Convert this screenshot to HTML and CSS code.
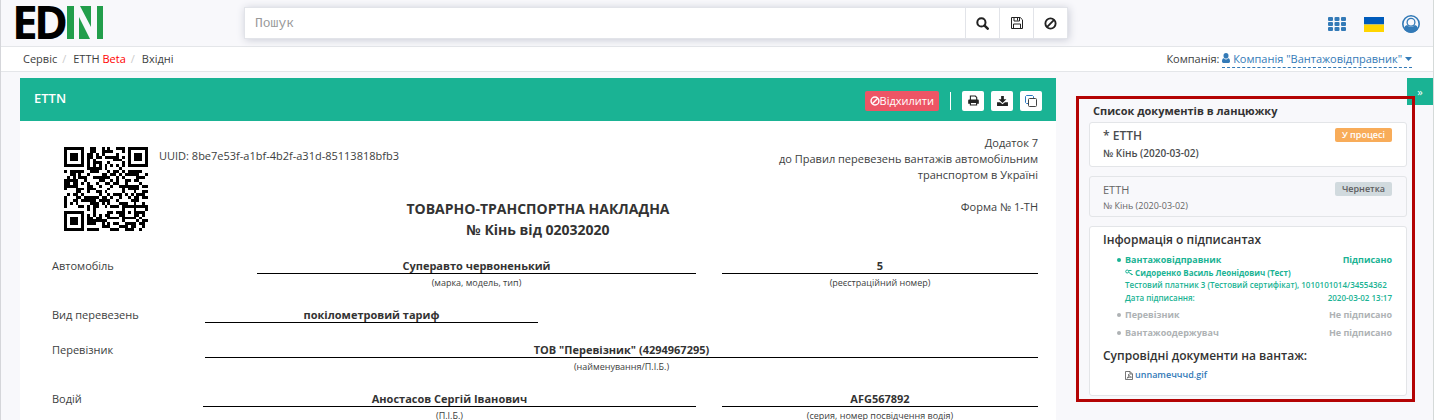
FILE: index.html
```html
<!DOCTYPE html>
<html lang="uk">
<head>
<meta charset="utf-8">
<title>EDIN – ЕТТН</title>
<link rel="stylesheet" href="styles.css">
</head>
<body>
<svg class="sprite" aria-hidden="true">
  <symbol id="ban" viewBox="0 0 16 16"><g fill="none" stroke="currentColor" stroke-width="2.3"><circle cx="8" cy="8" r="6.3"/><path d="M12.4 3.6 3.6 12.4"/></g></symbol>
</svg>
<header class="topbar">
  <a class="logo" href="#" aria-label="EDIN">
    <svg width="90" height="34" viewBox="0 0 90 34">
      <text class="logo-text" x="-3 19" y="33">ED</text>
      <g fill="#229e4b"><path d="M52 0h7v33h-7zM82 0h6v33h-6zM65 0h11v21zM64 11l11 22H64z"/></g>
    </svg>
  </a>
  <form class="search" role="search">
    <input class="search-input" type="text" placeholder="Пошук" aria-label="Пошук">
    <button class="search-btn" type="button" aria-label="Знайти"><svg width="13" height="13" viewBox="0 0 13 13"><g fill="none" stroke="currentColor"><circle cx="5.4" cy="5.4" r="4.1" stroke-width="2"/><path d="M8.6 8.6l3.1 3.1" stroke-width="2.5" stroke-linecap="round"/></g></svg></button>
    <button class="search-btn" type="button" aria-label="Зберегти"><svg width="12" height="12" viewBox="0 0 12 12"><path d="M.5.5h8.700l2.300 2.300v8.700H.5zM3 .5v3.500h5.500V.5M6.500 1v2.500M2.500 11.500v-4.500h7v4.500" fill="none" stroke="currentColor"/></svg></button>
    <button class="search-btn" type="button" aria-label="Очистити"><svg width="13" height="13"><use href="#ban"/></svg></button>
  </form>
  <nav class="tools">
    <a href="#" aria-label="Сервіси"><svg width="18" height="15" viewBox="0 0 18 15"><g fill="currentColor"><rect width="5" height="4" rx="1"/><rect x="6.500" width="5" height="4" rx="1"/><rect x="13" width="5" height="4" rx="1"/><rect y="5" width="5" height="4" rx="1"/><rect x="6.500" y="5" width="5" height="4" rx="1"/><rect x="13" y="5" width="5" height="4" rx="1"/><rect y="10" width="5" height="4" rx="1"/><rect x="6.500" y="10" width="5" height="4" rx="1"/><rect x="13" y="10" width="5" height="4" rx="1"/></g></svg></a>
    <a href="#" aria-label="Українська"><svg width="20" height="15" viewBox="0 0 20 15"><path fill="#005bbb" d="M0 0h20v7.500H0z"/><path fill="#ffd500" d="M0 7.500h20V15H0z"/></svg></a>
    <a href="#" aria-label="Профіль"><svg width="18" height="18" viewBox="0 0 18 18"><circle cx="9" cy="9" r="8.200" fill="none" stroke="currentColor" stroke-width="1.600"/><path fill="currentColor" d="M1.800 13.700c.5-2.100 1.600-3.400 3.400-3.800a4.500 4.500 0 0 0 7.600 0c1.800.4 2.900 1.700 3.400 3.800A9 9 0 0 1 9 17.700a9 9 0 0 1-7.200-4z"/><circle cx="9" cy="7.300" r="3.900" fill="none" stroke="currentColor" stroke-width="1.300"/></svg></a>
  </nav>
</header>
<div class="subbar">
  <nav class="crumbs"><a href="#">Сервіс</a><a href="#">ЕТТН <span class="beta">Beta</span></a><a href="#">Вхідні</a></nav>
  <div class="company">Компанія: <a class="company-link" href="#"><svg width="8" height="10" viewBox="0 0 8 10"><path fill="currentColor" d="M4 0a2.500 2.800 0 0 1 0 5.600A2.500 2.800 0 0 1 4 0zM1.800 5.200a3 3 0 0 0 4.400 0C7.500 5.300 8 6.700 8 8.300 8 9.500 7.500 10 6.600 10H1.400C.5 10 0 9.500 0 8.300 0 6.700.5 5.300 1.800 5.200z"/></svg> Компанія "Вантажовідправник" <svg width="7" height="8" viewBox="0 0 7 8"><path fill="currentColor" d="M0 2h7L3.500 6z"/></svg></a></div>
</div>
<div class="content">
  <main class="doc">
    <div class="doc-head">
      <h1>ETTN</h1>
      <button class="reject" type="button"><svg width="10" height="10"><use href="#ban"/></svg>Відхилити</button>
      <span class="divider"></span>
      <button class="tool-btn" type="button" aria-label="Друк"><svg width="11" height="11" viewBox="0 0 12 11"><path fill="none" stroke="currentColor" stroke-width="1.200" d="M2.600 5V.6H8l1.500 1.500V5M2.600 7.500v2.900h6.800V7.500z"/><path fill="currentColor" d="M1.500 4.500h9c.8 0 1.300.5 1.300 1.300V9H9.500V7.300h-7V9H.2V5.800c0-.8.500-1.300 1.300-1.300z"/></svg></button>
      <button class="tool-btn" type="button" aria-label="Завантажити"><svg width="11" height="10" viewBox="0 0 12 11"><path fill="currentColor" d="M4.500 0h3v3.500h2.800L6 7.600 1.700 3.500h2.800zM0 7h3.300L6 9.200 8.700 7H12v4H0z"/></svg></button>
      <button class="tool-btn" type="button" aria-label="Копіювати"><svg width="12" height="12" viewBox="0 0 12 12"><g fill="none"><path stroke="#2b78c0" d="M3 8.500H1.500l-1-1v-6l1-1h6l1 1V3"/><rect x="3.500" y="3.500" width="8" height="8" rx="1" stroke="#444"/></g></svg></button>
    </div>
    <div class="doc-body">
      <div class="doc-top">
        <svg class="qr" id="qr" role="img" aria-label="QR-код" viewBox="0 0 29 29" shape-rendering="crispEdges"></svg>
        <p class="uuid">UUID: <span id="uuid">8be7e53f-a1bf-4b2f-a31d-85113818bfb3</span></p>
        <p class="annex">Додаток 7<br>до Правил перевезень вантажів автомобільним<br>транспортом в Україні<br><br>Форма № 1-ТН</p>
        <h2 class="doc-title">ТОВАРНО-ТРАНСПОРТНА НАКЛАДНА<br>№ Кінь від 02032020</h2>
      </div>
      <div class="row row-car"><span>Автомобіль</span><div class="field"><b>Суперавто червоненький</b><small>(марка, модель, тип)</small></div><div class="field"><b>5</b><small>(реєстраційний номер)</small></div></div>
      <div class="row row-kind"><span>Вид перевезень</span><div class="field"><b>покілометровий тариф</b></div></div>
      <div class="row row-carrier"><span>Перевізник</span><div class="field"><b>ТОВ "Перевізник" (4294967295)</b><small>(найменування/П.І.Б.)</small></div></div>
      <div class="row row-driver"><span>Водій</span><div class="field"><b>Аностасов Сергій Іванович</b><small>(П.І.Б.)</small></div><div class="field"><b>AFG567892</b><small>(серия, номер посвідчення водія)</small></div></div>
    </div>
  </main>
  <aside class="side">
    <button class="collapse" type="button" aria-label="Згорнути">»</button>
    <div class="highlight"></div>
    <h2 class="side-title">Список документів в ланцюжку</h2>
    <a class="card chain current" href="#"><span class="chain-name">* ЕТТН</span><span class="badge badge-process">У процесі</span><span class="chain-num">№ Кінь (2020-03-02)</span></a>
    <a class="card chain" href="#"><span class="chain-name">ЕТТН</span><span class="badge">Чернетка</span><span class="chain-num">№ Кінь (2020-03-02)</span></a>
    <section class="card info">
      <h3>Інформація о підписантах</h3>
      <ul class="signers">
        <li class="signed">
          <div class="pair"><span>Вантажовідправник</span><span>Підписано</span></div>
          <div class="detail"><svg width="8" height="8" viewBox="0 0 8 8"><g fill="none" stroke="currentColor"><circle cx="2.200" cy="3.500" r="1.500"/><path d="M3.500 2.500H6.500M3.500 4l3.500 3M6.500 5l-1 1M7.800 6l-1 1"/></g></svg> <b>Сидоренко Василь Леонідович (Тест)</b></div>
          <div class="detail">Тестовий платник 3 (Тестовий сертифікат), 1010101014/34554362</div>
          <div class="pair detail"><span>Дата підписання:</span><span>2020-03-02 13:17</span></div>
        </li>
        <li><div class="pair"><span>Перевізник</span><span>Не підписано</span></div></li>
        <li><div class="pair"><span>Вантажоодержувач</span><span>Не підписано</span></div></li>
      </ul>
      <h3>Супровідні документи на вантаж:</h3>
      <a class="file" href="#"><svg width="8" height="9" viewBox="0 0 8 9"><path fill="none" stroke="#555" d="M.5.5h4.500l2.500 2.500v5.500h-7zM5 .5V3h2.500M2 7.200C3.500 6 4 4.500 3.700 3.200 4 5 5 6 6.500 6.200 5 6 3.500 6.300 2 7.200z" stroke-width=".8"/></svg><span>unnameчччd.gif</span></a>
    </section>
  </aside>
</div>
<script src="qr.js"></script>
</body>
</html>
```
FILE: styles.css
```css
* { box-sizing: border-box; }
body {
  margin: 0;
  min-height: 100vh;
  border-left: 1px solid #d5d6da;
  border-right: 1px solid #d5dad9;
  background: #f8f8fb;
  color: #3c3e40;
  font: 11px/16px "Open Sans", "Noto Sans", sans-serif;
  overflow-x: hidden;
}
h1, h2, h3, p, ul { margin: 0; padding: 0; }
a { color: inherit; text-decoration: none; }
button { border: 0; padding: 0; font: inherit; cursor: pointer; }
.sprite { display: none; }

.topbar { display: flex; height: 47px; padding: 0 13px 0 14px; border-bottom: 1px solid #e4e6e9; }
.logo { flex: 0 0 229px; padding-top: 6px; }
.logo svg { display: block; overflow: visible; }
.logo-text { font: 700 46px "Open Sans", sans-serif; fill: #000; }
.search { display: flex; flex: 0 1 824px; height: 32px; margin-top: 7px; border: 1px solid #e2e4e9; background: #fff; box-shadow: 1px 1px 8px #c9cbd6; }
.search-input { flex: 1; min-width: 0; border: 0; padding: 0 10px; background: none; color: #333; font: 13px "Liberation Mono", monospace; }
.search-input::placeholder { color: #999; opacity: 1; }
.search-btn { display: grid; place-items: center; width: 34px; border-left: 1px solid #e2e4e9; background: #fff; color: #222; }
.tools { display: flex; align-items: center; gap: 18px; margin-left: auto; padding-top: 2px; color: #337ab7; }
.tools svg { display: block; }

.subbar { display: flex; justify-content: space-between; height: 25px; padding: 4px 21px 4px 22px; border-bottom: 1px solid #e4e6e9; background: #fff; }
.crumbs a + a::before { content: "/"; padding: 0 7px 0 5px; color: #ccc; }
.beta { color: #f00; }
.company-link { display: inline-block; border-bottom: 1px dashed #337ab7; color: #337ab7; }

.content { display: flex; margin-top: 6px; padding-left: 19px; }
.doc { flex: 1; background: #fff; }
.doc-head { display: flex; align-items: center; gap: 7px; height: 43px; padding: 2px 14px 0; background: #1ab394; color: #fff; }
.doc-head h1 { margin-right: auto; padding-bottom: 5px; font-size: 13px; font-weight: 600; }
.reject { display: flex; align-items: center; height: 20px; padding: 0 5px; border-radius: 2px; background: #ed5565; color: #fff; }
.divider { width: 1px; height: 18px; margin: 0 4px; background: #fff; }
.tool-btn { display: grid; place-items: center; width: 22px; height: 20px; border-radius: 2px; background: #fff; color: #222; }
.doc-body { padding: 14px 18px 0; }
.doc-top { display: grid; grid-template-columns: 110px 1fr auto; grid-template-rows: 63px 42px; }
.qr { grid-row: 1 / 3; grid-column: 1; width: 84px; height: 84px; margin: 12px 0 0 26px; }
.uuid { grid-row: 1; grid-column: 2; padding: 13px 0 0 11px; }
.annex { grid-row: 1 / 3; grid-column: 3; text-align: right; }
.doc-title { grid-row: 2; grid-column: 1 / 4; font-size: 14px; line-height: 21px; text-align: center; color: #333; }
.row { display: grid; column-gap: 26px; padding-left: 14px; }
.row-car { grid-template-columns: 179px 439fr 316fr; margin-top: 18px; }
.row-kind { grid-template-columns: 127px 333fr 474fr; margin-top: 16px; }
.row-carrier { grid-template-columns: 127px 1fr; margin-top: 18px; }
.row-driver { grid-template-columns: 125px 493fr 316fr; margin-top: 16px; }
.field { text-align: center; }
.field b { display: block; height: 16px; margin-bottom: 1px; border-bottom: 1px solid #000; color: #333; }
.field small { display: block; font-size: 9px; }

.side { position: relative; flex: 0 0 377px; padding: 25px 26px 0 33px; }
.collapse { position: absolute; top: 0; right: 0; width: 26px; height: 27px; background: #1ab394; color: #fff; }
.highlight { position: absolute; top: 18px; left: 20px; right: 18px; height: 306px; border: 3px solid #b40404; pointer-events: none; }
.side-title { padding-left: 4px; margin-bottom: 3px; font-size: 11px; color: #333; }
.card { display: block; border: 1px solid #e3e5e8; border-radius: 3px; padding: 5px 14px 5px 13px; }
.chain { display: grid; grid-template-columns: 1fr 57px; align-items: start; height: 41px; margin-bottom: 9px; color: #666; }
.chain.current { height: 45px; background: #fff; color: #4a4c4e; font-weight: 600; }
.chain-num { font-size: 9px; }
.current .chain-name { font-size: 12px; }
.current .chain-num { font-size: 10px; }
.badge { border-radius: 2px; background: #d1dade; color: #5e5e5e; font-size: 9px; line-height: 14px; font-weight: 600; text-align: center; }
.badge-process { background: #f8ac59; color: #fff; }
.info { background: #fff; padding-bottom: 12px; }
.info h3 { font-size: 12px; font-weight: 600; color: #333; }
.signers { margin: 5px 0 8px; list-style: none; color: #aeb2b4; }
.signers li { position: relative; padding-left: 22px; font-size: 9px; font-weight: 700; line-height: 14px; margin-bottom: 4px; }
.signers li::before { content: ""; position: absolute; left: 14px; top: 5px; width: 4px; height: 4px; border-radius: 50%; background: currentColor; }
.signers .signed { color: #1ab394; }
.pair { display: flex; justify-content: space-between; }
.signers .detail { font-size: 8px; line-height: 12px; font-weight: 600; white-space: nowrap; }
.signers .detail:last-child { line-height: 13px; }
.detail b { font-weight: 700; }
.file { display: flex; align-items: center; gap: 2px; padding-left: 22px; margin-top: 3px; color: #337ab7; font-size: 9px; font-weight: 600; }
```
FILE: qr.js
```js
// QR code, version 3, level M, byte mode.
(function () {
  const text = document.getElementById("uuid").textContent;
  const size = 29, dataLen = 44, ecLen = 26, levelBits = 0;

  let bits = "0100" + text.length.toString(2).padStart(8, "0");
  for (const c of text) bits += c.charCodeAt(0).toString(2).padStart(8, "0");
  bits += "0000";
  const data = bits.match(/.{8}/g).map(b => parseInt(b, 2));
  for (let i = 0; data.length < dataLen; i++) data.push(i % 2 ? 17 : 236);

  const exp = [], log = [];
  for (let i = 0, x = 1; i < 255; i++) {
    exp[i] = x; log[x] = i;
    x <<= 1; if (x > 255) x ^= 285;
  }
  const mul = (a, b) => a && b ? exp[(log[a] + log[b]) % 255] : 0;
  let gen = [1];
  for (let i = 0; i < ecLen; i++) {
    const next = gen.concat(0);
    gen.forEach((g, j) => { next[j + 1] ^= mul(g, exp[i]); });
    gen = next;
  }
  const rest = data.concat(Array(ecLen).fill(0));
  for (let i = 0; i < dataLen; i++) {
    const f = rest[i];
    gen.forEach((g, j) => { rest[i + j] ^= mul(g, f); });
  }
  const stream = data.concat(rest.slice(dataLen)).map(b => b.toString(2).padStart(8, "0")).join("");

  const fixed = Array.from({ length: size }, () => Array(size).fill(null));
  const finder = (r0, c0) => {
    for (let r = -1; r < 8; r++) for (let c = -1; c < 8; c++) {
      const d = Math.max(Math.abs(r - 3), Math.abs(c - 3));
      if (fixed[r0 + r] && c0 + c >= 0 && c0 + c < size) fixed[r0 + r][c0 + c] = d !== 2 && d !== 4;
    }
  };
  finder(0, 0); finder(0, size - 7); finder(size - 7, 0);
  for (let r = -2; r < 3; r++) for (let c = -2; c < 3; c++)
    fixed[22 + r][22 + c] = Math.max(Math.abs(r), Math.abs(c)) !== 1;
  for (let i = 8; i < size - 8; i++) fixed[6][i] = fixed[i][6] = i % 2 === 0;

  const masks = [
    (r, c) => (r + c) % 2, r => r % 2, (r, c) => c % 3, (r, c) => (r + c) % 3,
    (r, c) => ((r >> 1) + Math.floor(c / 3)) % 2, (r, c) => r * c % 2 + r * c % 3,
    (r, c) => (r * c % 2 + r * c % 3) % 2, (r, c) => ((r + c) % 2 + r * c % 3) % 2
  ];
  function build(m) {
    const g = fixed.map(row => row.slice());
    let f = levelBits << 3 | m, rem = f;
    for (let i = 0; i < 10; i++) rem = rem << 1 ^ (rem >> 9) * 0x537;
    f = (f << 10 | rem) ^ 0x5412;
    const bit = i => (f >> i & 1) === 1;
    for (let i = 0; i < 6; i++) g[i][8] = bit(i);
    g[7][8] = bit(6); g[8][8] = bit(7); g[8][7] = bit(8);
    for (let i = 9; i < 15; i++) g[8][14 - i] = bit(i);
    for (let i = 0; i < 8; i++) g[8][size - 1 - i] = bit(i);
    for (let i = 8; i < 15; i++) g[size - 15 + i][8] = bit(i);
    g[size - 8][8] = true;
    let n = 0, up = true;
    for (let right = size - 1; right > 0; right -= 2) {
      if (right === 6) right = 5;
      for (let k = 0; k < size; k++) {
        const r = up ? size - 1 - k : k;
        for (const c of [right, right - 1])
          if (g[r][c] === null) g[r][c] = (stream[n++] === "1") !== (masks[m](r, c) === 0);
      }
      up = !up;
    }
    return g;
  }
  function penalty(g) {
    let p = 0, dark = 0;
    const cols = g[0].map((_, c) => g.map(row => row[c]));
    for (const line of g.concat(cols)) {
      const s = line.map(Number).join("");
      for (const run of s.match(/0+|1+/g)) if (run.length > 4) p += run.length - 2;
      for (let i = 0; i < size - 10; i++)
        if (/^(10111010000|00001011101)/.test(s.slice(i))) p += 40;
    }
    g.forEach((row, r) => row.forEach((v, c) => {
      dark += v;
      if (r && c && v === g[r - 1][c] && v === row[c - 1] && v === g[r - 1][c - 1]) p += 3;
    }));
    return p + Math.floor(Math.abs(dark * 20 / (size * size) - 10)) * 10;
  }
  const best = masks.map((_, m) => build(m)).sort((a, b) => penalty(a) - penalty(b))[0];
  let d = "";
  best.forEach((row, r) => row.forEach((v, c) => { if (v) d += `M${c} ${r}h1v1h-1z`; }));
  const path = document.createElementNS("http://www.w3.org/2000/svg", "path");
  path.setAttribute("d", d);
  document.getElementById("qr").append(path);
})();
```
